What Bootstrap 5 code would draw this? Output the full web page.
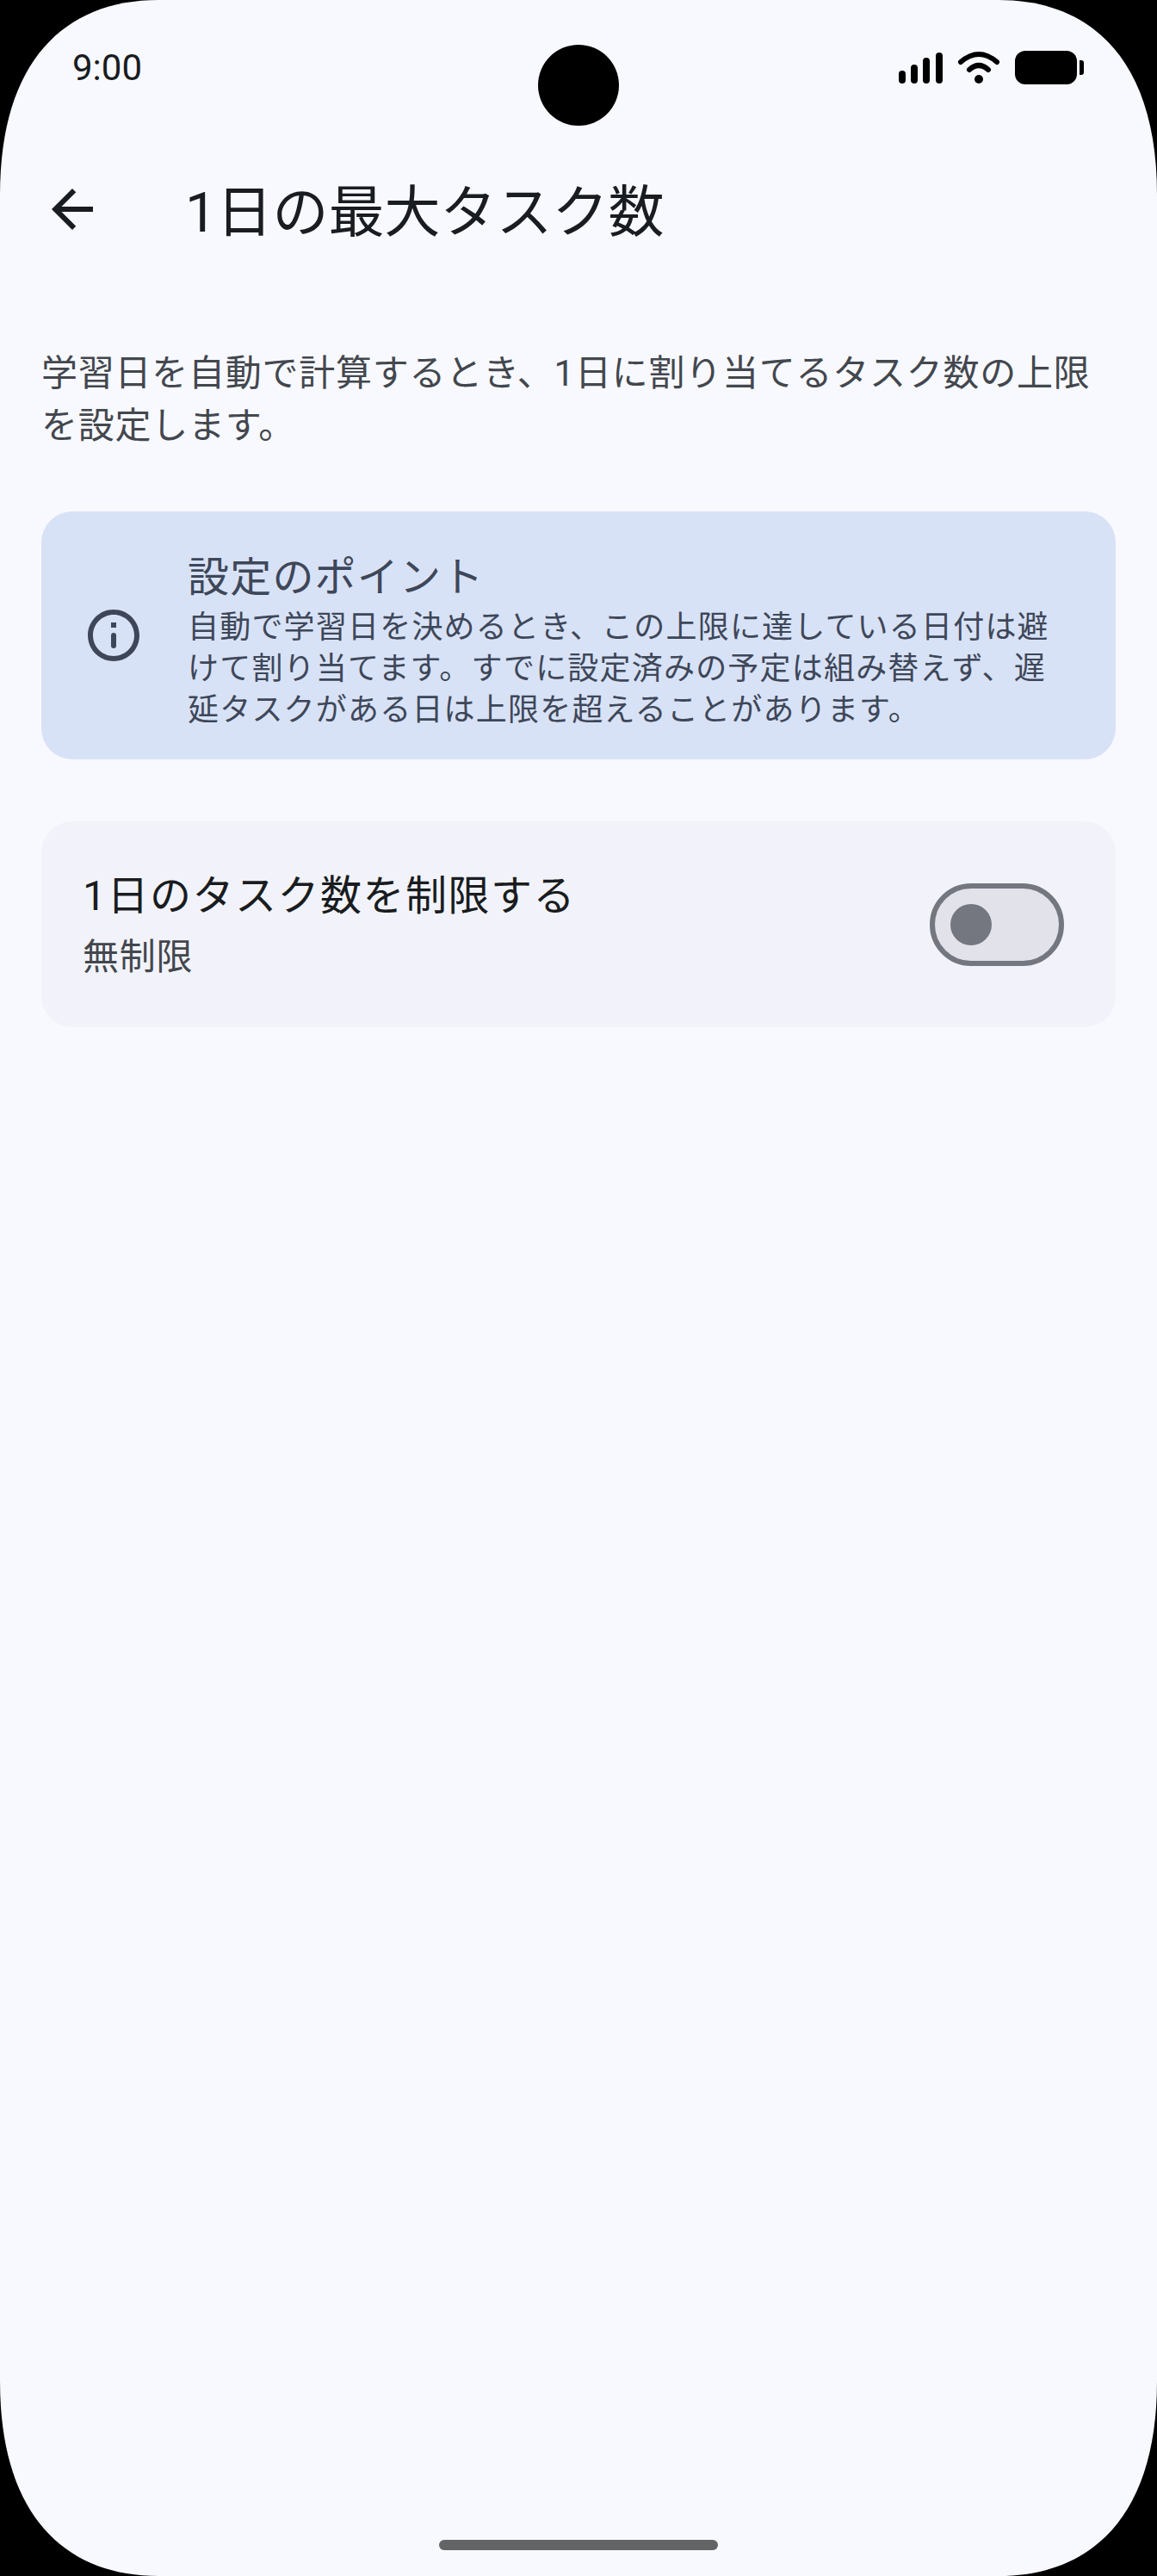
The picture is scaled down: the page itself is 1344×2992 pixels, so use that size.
<!DOCTYPE html>
<html lang="ja">
<head>
    <meta charset="UTF-8">
    <meta name="viewport" content="width=device-width, initial-scale=1.0">
    <title>1日の最大タスク数</title>
    <link href="https://cdn.jsdelivr.net/npm/bootstrap@5.3.0/dist/css/bootstrap.min.css" rel="stylesheet">
    <style>
        body {
            background: #000;
            font-family: Roboto, "Noto Sans CJK JP", sans-serif;
            color: #191c20;
        }
        .phone-screen {
            position: relative;
            width: 1344px;
            height: 2992px;
            background: #f8f9ff;
            clip-path: path('M0 226C0 71 75 0 184 0H1160C1269 0 1344 71 1344 226V2766C1344 2921 1269 2992 1160 2992H184C75 2992 0 2921 0 2766Z');
            overflow: hidden;
        }
        .status-row {
            height: 159px;
            padding: 59px 84px 0 84px;
        }
        .clock-text {
            font-size: 42px;
            line-height: 40px;
        }
        .cam-hole {
            position: absolute;
            left: 625px;
            top: 52px;
            width: 94px;
            height: 94px;
            border-radius: 50%;
            background: #000;
        }
        .app-bar {
            height: 168px;
            padding-left: 48px;
        }
        .app-bar svg { width: 72px; height: 72px; fill: #191c20; }
        .app-title {
            font-size: 65px;
            line-height: 84px;
            font-weight: 400;
            margin: 7px 0 0 95px;
        }
        .page-body { padding: 0 48px; }
        .intro-text {
            font-size: 42px;
            line-height: 61px;
            letter-spacing: .75px;
            color: #43474e;
            padding-top: 76px;
            margin: 0 0 69px 0;
        }
        .hint-box {
            height: 288px;
            background: #d8e2f6;
            border-radius: 36px;
            color: #3e4759;
            padding-left: 48px;
            margin-bottom: 72px;
        }
        .hint-box svg { width: 72px; height: 72px; fill: #3e4759; flex: none; }
        .hint-title { font-size: 48px; line-height: 66px; letter-spacing: 1.2px; }
        .hint-desc { font-size: 36px; line-height: 48px; letter-spacing: 1.2px; margin-top: 1px; }
        .hint-text { margin-left: 50px; width: 1015px; padding-top: 44px; }
        .limit-row {
            height: 239px;
            background: #f2f3fa;
            border-radius: 36px;
            padding: 0 60px 0 48px;
        }
        .limit-title { font-size: 48px; line-height: 72px; letter-spacing: 1.5px; }
        .limit-sub { font-size: 42px; line-height: 60px; letter-spacing: .75px; color: #43474e; margin-top: 5px; }
        .toggle-track {
            width: 156px;
            height: 96px;
            border: 6px solid #74777f;
            border-radius: 48px;
            background: #e1e2ea;
            padding-left: 18px;
        }
        .toggle-thumb {
            width: 48px;
            height: 48px;
            border-radius: 50%;
            background: #74777f;
        }
        .home-handle {
            position: absolute;
            left: 510px;
            top: 2950px;
            width: 324px;
            height: 12px;
            border-radius: 6px;
            background: #636466;
        }
    </style>
</head>
<body class="m-0">
    <div class="phone-screen">
        <!-- status bar -->
        <div class="status-row d-flex justify-content-between align-items-start">
            <span class="clock-text">9:00</span>
            <svg width="216" height="40" viewBox="0 0 216 40" fill="#000">
                <rect x="0" y="23" width="8" height="15" rx="4"/>
                <rect x="14" y="16" width="8" height="22" rx="4"/>
                <rect x="28" y="8" width="8" height="30" rx="4"/>
                <rect x="43" y="2" width="8" height="36" rx="4"/>
                <path d="M72 13 Q93 -5 114 13" fill="none" stroke="#000" stroke-width="6" stroke-linecap="round"/>
                <path d="M82 22 Q93 12 104 22" fill="none" stroke="#000" stroke-width="6" stroke-linecap="round"/>
                <circle cx="93" cy="33" r="5"/>
                <rect x="135" y="0" width="72" height="39" rx="12"/>
                <path d="M210 11h2a3 3 0 0 1 3 3v11a3 3 0 0 1-3 3h-2z"/>
            </svg>
        </div>
        <div class="cam-hole"></div>

        <!-- app bar -->
        <div class="app-bar d-flex align-items-center">
            <svg viewBox="0 0 24 24"><path d="M20 11H7.83l5.59-5.59L12 4l-8 8 8 8 1.41-1.41L7.83 13H20v-2z"/></svg>
            <h1 class="app-title">1日の最大タスク数</h1>
        </div>

        <div class="page-body">
            <p class="intro-text">学習日を自動で計算するとき、1日に割り当てるタスク数の上限を設定します。</p>

            <div class="hint-box d-flex align-items-center">
                <svg viewBox="0 0 24 24"><path d="M11 7h2v2h-2zM12 2C6.48 2 2 6.48 2 12s4.48 10 10 10 10-4.48 10-10S17.52 2 12 2zm0 18c-4.41 0-8-3.59-8-8s3.59-8 8-8 8 3.59 8 8-3.59 8-8 8z"/><rect x="11" y="11" width="2" height="6" rx="1"/></svg>
                <div class="hint-text align-self-start">
                    <div class="hint-title">設定のポイント</div>
                    <div class="hint-desc">自動で学習日を決めるとき、この上限に達している日付は避けて割り当てます。すでに設定済みの予定は組み替えず、遅延タスクがある日は上限を超えることがあります。</div>
                </div>
            </div>

            <div class="limit-row d-flex justify-content-between align-items-center">
                <div>
                    <div class="limit-title">1日のタスク数を制限する</div>
                    <div class="limit-sub">無制限</div>
                </div>
                <div class="toggle-track d-flex align-items-center">
                    <div class="toggle-thumb"></div>
                </div>
            </div>
        </div>

        <div class="home-handle"></div>
    </div>
    <script src="https://cdn.jsdelivr.net/npm/bootstrap@5.3.0/dist/js/bootstrap.bundle.min.js"></script>
</body>
</html>
